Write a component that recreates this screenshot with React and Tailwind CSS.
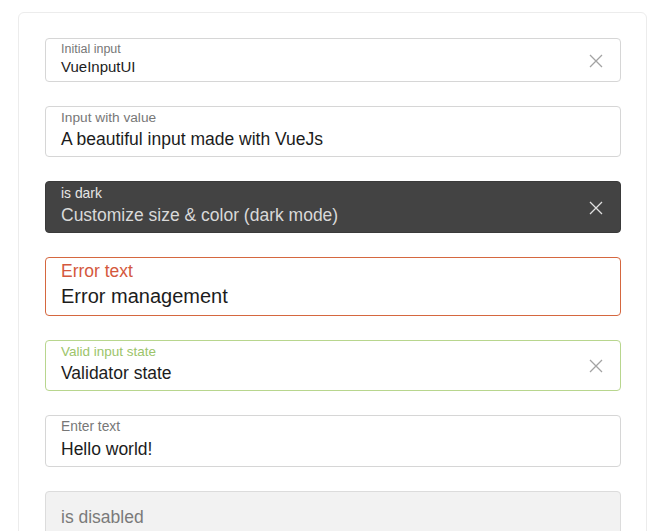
import React from "react";

const XIcon = ({ color }) => (
  <svg width="16" height="16" viewBox="0 0 16 16" className="shrink-0">
    <path d="M2 2 L14 14 M14 2 L2 14" stroke={color} strokeWidth="1.3" fill="none" />
  </svg>
);

function Field({ box, label, value, icon, iconColor }) {
  return (
    <div className={"flex items-center rounded-[4px] border pl-[15px] pr-[16px] " + box}>
      <div className="flex min-w-0 flex-1 flex-col">
        {label}
        {value}
      </div>
      {icon && (
        <div className="pt-[4px]">
          <XIcon color={iconColor} />
        </div>
      )}
    </div>
  );
}

export default function App() {
  return (
    <div className="h-[531px] w-full overflow-hidden bg-white" style={{ fontFamily: '"Liberation Sans", Arial, sans-serif' }}>
      <div className="ml-[18px] mt-[12px] h-[560px] w-[629px] rounded-[6px] border border-[#ececec] pl-[26px] pr-[25px] pt-[25px]">
        <div className="flex flex-col gap-6">
          <Field
            box="border-[#d6d6d6] bg-white pt-[3px] pb-[5px]"
            label={<div className="text-[12.5px] leading-[14px] text-[#777777]">Initial input</div>}
            value={<div className="mt-[2px] text-[15px] leading-[18px] text-[#1c1c1c]">VueInputUI</div>}
            icon
            iconColor="#a3a3a3"
          />
          <Field
            box="border-[#d6d6d6] bg-white pt-[3px] pb-[6px]"
            label={<div className="text-[13.7px] leading-[16px] text-[#777777]">Input with value</div>}
            value={<div className="mt-[2px] text-[17.5px] leading-[22px] text-[#1c1c1c]">A beautiful input made with VueJs</div>}
          />
          <Field
            box="border-[#3a3a3a] bg-[#434343] pt-[3px] pb-[6px]"
            label={<div className="text-[13.9px] leading-[16px] text-[#e6e6e6]">is dark</div>}
            value={<div className="mt-[3px] text-[17.5px] leading-[22px] text-[#d9d9d9]">Customize size &amp; color (dark mode)</div>}
            icon
            iconColor="#e0e0e0"
          />
          <Field
            box="border-[#d5673f] bg-white pt-[3px] pb-[7px]"
            label={<div className="text-[17.5px] leading-[20px] text-[#d4583d]">Error text</div>}
            value={<div className="mt-[3px] text-[20px] leading-[24px] text-[#1c1c1c]">Error management</div>}
          />
          <Field
            box="border-[#b8d68e] bg-white pt-[3px] pb-[6px]"
            label={<div className="text-[13.5px] leading-[16px] text-[#9cc46a]">Valid input state</div>}
            value={<div className="mt-[2px] text-[17.5px] leading-[22px] text-[#1c1c1c]">Validator state</div>}
            icon
            iconColor="#a3a3a3"
          />
          <Field
            box="border-[#d6d6d6] bg-white pt-[3px] pb-[6px]"
            label={<div className="text-[13.8px] leading-[16px] text-[#777777]">Enter text</div>}
            value={<div className="mt-[3px] text-[17.5px] leading-[22px] text-[#1c1c1c]">Hello world!</div>}
          />
          <Field
            box="border-[#dcdcdc] bg-[#f2f2f2] pt-[14px] pb-[14px]"
            value={<div className="text-[17.5px] leading-[22px] text-[#7a7a7a]">is disabled</div>}
          />
        </div>
      </div>
    </div>
  );
}
